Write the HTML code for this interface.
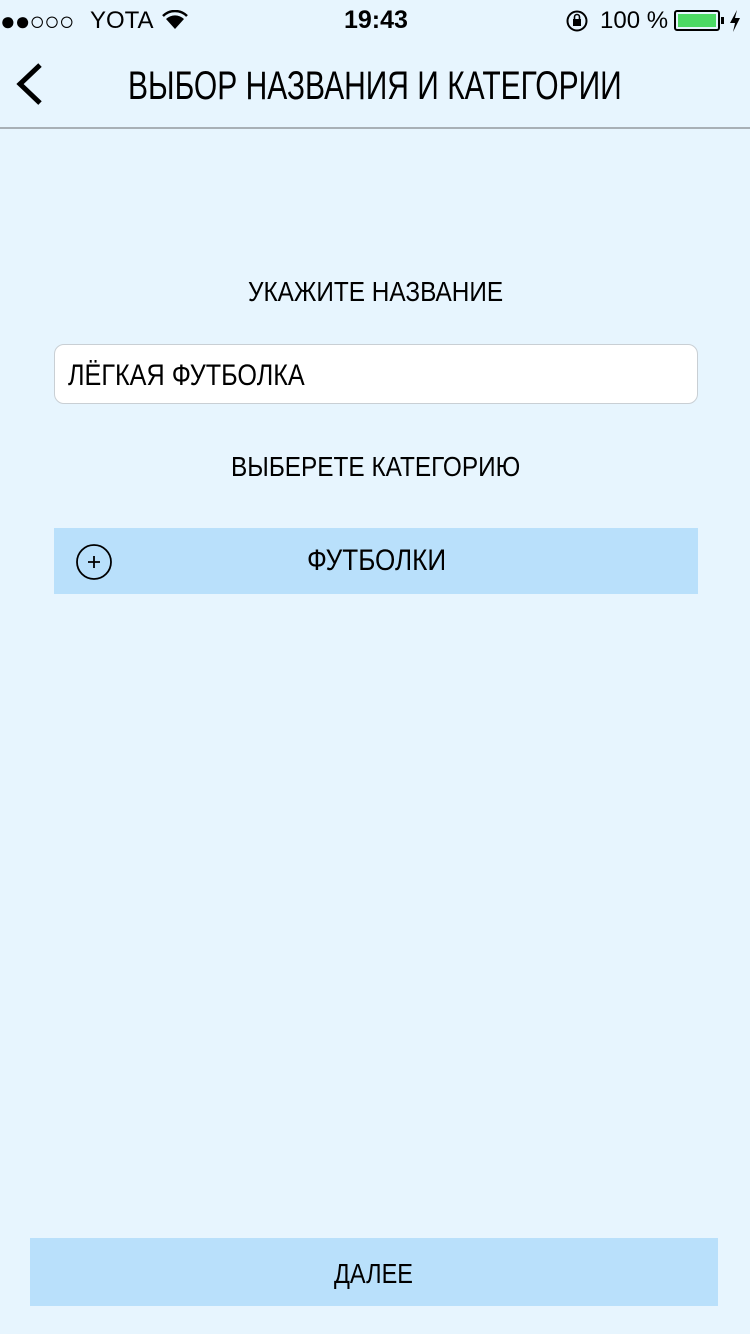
<!DOCTYPE html>
<html><head><meta charset="utf-8"><style>
*{margin:0;padding:0;box-sizing:border-box}
body{width:750px;height:1334px;background:#e7f5fe;font-family:"Liberation Sans",sans-serif;position:relative;overflow:hidden;color:#000}
.a{position:absolute}
.t{position:absolute;white-space:nowrap;line-height:1;transform-origin:0 0}
</style></head><body>
<div class="t" style="left:0;top:8px;font-size:26px;letter-spacing:-1px">●●○○○</div>
<div class="t" style="left:90px;top:9px;font-size:24px">YOTA</div>
<svg class="a" style="left:162px;top:10px" width="26" height="20" viewBox="0 0 26 20"><path d="M13 19 L4 9 A13 13 0 0 1 22 9 Z" fill="#000"/><path d="M1 6 A17 17 0 0 1 25 6" stroke="#000" stroke-width="2.5" fill="none"/></svg>
<div class="t" style="left:344px;top:8px;font-size:25px;font-weight:bold">19:43</div>
<svg class="a" style="left:565px;top:9px" width="24" height="24" viewBox="0 0 24 24"><circle cx="12" cy="12" r="9.5" fill="none" stroke="#000" stroke-width="2"/><rect x="8" y="10" width="8" height="7" fill="#000"/><path d="M9.5 10 V8 a2.5 2.5 0 0 1 5 0 V10" stroke="#000" stroke-width="1.6" fill="none"/></svg>
<div class="t" style="left:600px;top:9px;font-size:24px">100 %</div>
<div class="a" style="left:674px;top:10px;width:46px;height:21px;border:2px solid #000;border-radius:3px;padding:2px"><div style="width:100%;height:100%;background:#4cd964"></div></div>
<div class="a" style="left:721px;top:17px;width:3px;height:7px;background:#000"></div>
<svg class="a" style="left:729px;top:10px" width="12" height="22" viewBox="0 0 12 22"><path d="M8 0 L1 13 H6 L4 22 L11 8 H6 Z" fill="#000"/></svg>
<svg class="a" style="left:14px;top:62px" width="30" height="44" viewBox="0 0 30 44"><path d="M26 3 L6 22 L26 41" stroke="#000" stroke-width="5" fill="none"/></svg>
<div class="t" style="left:128px;top:66px;font-size:40px;transform:scaleX(0.75)">ВЫБОР НАЗВАНИЯ И КАТЕГОРИИ</div>
<div class="a" style="left:0;top:127px;width:750px;height:2px;background:#a8b0b6"></div>
<div class="t" style="left:248px;top:278px;font-size:28px;transform:scaleX(0.87)">УКАЖИТЕ НАЗВАНИЕ</div>
<div class="a" style="left:54px;top:344px;width:644px;height:60px;background:#fff;border:1px solid #c9cfd4;border-radius:10px"></div>
<div class="t" style="left:68px;top:361px;font-size:30px;transform:scaleX(0.84)">ЛЁГКАЯ ФУТБОЛКА</div>
<div class="t" style="left:231px;top:453px;font-size:28px;transform:scaleX(0.87)">ВЫБЕРЕТЕ КАТЕГОРИЮ</div>
<div class="a" style="left:54px;top:528px;width:644px;height:66px;background:#b9e0fb"></div>
<svg class="a" style="left:75px;top:542px" width="40" height="40" viewBox="0 0 40 40"><circle cx="19" cy="20" r="17" fill="none" stroke="#000" stroke-width="1.8"/><path d="M13 20 H25 M19 14 V26" stroke="#000" stroke-width="1.8"/></svg>
<div class="t" style="left:307px;top:546px;font-size:30px;transform:scaleX(0.87)">ФУТБОЛКИ</div>
<div class="a" style="left:30px;top:1238px;width:688px;height:68px;background:#b9e0fb"></div>
<div class="t" style="left:334px;top:1260px;font-size:28px;transform:scaleX(0.84)">ДАЛЕЕ</div>
</body></html>
